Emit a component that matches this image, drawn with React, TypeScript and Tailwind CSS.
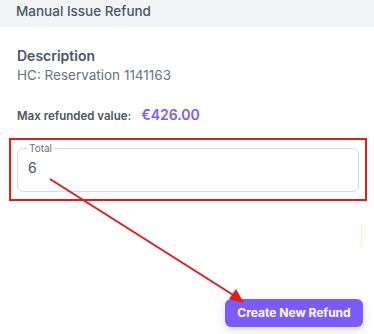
import React from 'react';

const App = () => {
  return (
    <div className="relative w-[374px] h-[334px] bg-white overflow-hidden" style={{ fontFamily: 'Inter, "Noto Sans", sans-serif' }}>
      {/* Header */}
      <div className="h-[27px] bg-[#f3f4f6] pl-4 pt-[2px]">
        <h1 className="text-[13.5px] leading-[18px] font-medium text-[#4b5563]">Manual Issue Refund</h1>
      </div>

      <div className="px-[17px] pt-[20px]">
        <div className="text-[14px] leading-[18px] font-semibold text-[#4b5563]">Description</div>
        <div className="text-[13.5px] leading-[18px] text-[#6b7280] mt-[1px]">HC: Reservation 1141163</div>

        <div className="flex items-baseline gap-[10px] mt-[20px]">
          <span className="text-[11.5px] font-semibold text-[#4b5563]">Max refunded value:</span>
          <span className="text-[14px] font-semibold text-[#7c5cfc]">€426.00</span>
        </div>
      </div>

      {/* Highlighted field */}
      <div className="mx-[9px] mt-[13px] w-[358px] h-[63px] border-2 border-[#e21b1b] px-[6px] pt-[2px]">
        <fieldset className="h-[50px] border border-[#d6d9de] rounded-[6px] px-[10px] pb-[4px]">
          <legend className="text-[10px] leading-[12px] text-[#6b7280] px-[2px] ml-[-1px]">Total</legend>
          <div className="text-[14px] leading-[18px] text-[#4b5563] mt-[5px]">6</div>
        </fieldset>
      </div>

      {/* faint artifact line */}
      <div className="absolute left-[361px] top-[224px] w-[1px] h-[21px] bg-[#fdf0b0]" />

      {/* Button */}
      <div className="flex justify-end pr-[11px] mt-[98px]">
        <button className="w-[138px] h-[28px] rounded-[6px] bg-[#7b5cfa] text-white text-[12px] font-bold shadow-[0_3px_8px_rgba(123,92,250,0.25)]">
          Create New Refund
        </button>
      </div>

      {/* Annotation arrow */}
      <svg className="absolute left-0 top-0 pointer-events-none" width="374" height="334">
        <line x1="50" y1="179" x2="238" y2="298" stroke="#e21b1b" strokeWidth="2" />
        <polygon points="244,303 229,299 236,289" fill="#e21b1b" />
      </svg>
    </div>
  );
};

export default App;
